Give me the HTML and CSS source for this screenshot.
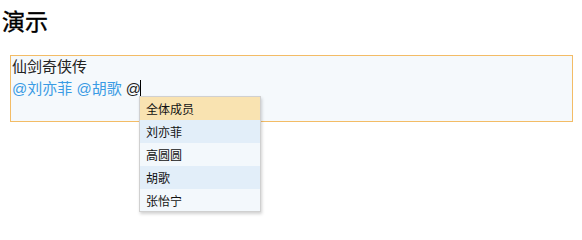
FILE: index.html
```html
<!DOCTYPE html>
<html lang="zh">
<head>
<meta charset="utf-8">
<title>演示</title>
<link rel="stylesheet" href="styles.css">
</head>
<body>
<h2 class="title">演示</h2>
<div class="editor">
  <div class="line">仙剑奇侠传</div>
  <div class="line"><span class="mention">@刘亦菲</span> <span class="mention">@胡歌</span> @<span class="caret"></span></div>
</div>
<ul class="menu">
  <li class="item active">全体成员</li>
  <li class="item odd">刘亦菲</li>
  <li class="item even">高圆圆</li>
  <li class="item odd">胡歌</li>
  <li class="item even">张怡宁</li>
</ul>
</body>
</html>
```
FILE: styles.css
```css
html, body {
  margin: 0;
  padding: 0;
  background: #fff;
}
body {
  position: relative;
  width: 582px;
  height: 240px;
  font-family: "Liberation Sans", "Noto Sans CJK SC", sans-serif;
  color: #222;
}
.title {
  margin: 4px 0 0 2px;
  font-family: "Noto Sans CJK SC", serif;
  font-size: 23px;
  line-height: 32px;
  font-weight: normal;
  color: #000;
  -webkit-text-stroke: 0.4px #000;
}
.editor {
  margin: 19px 0 0 10px;
  width: 560px;
  height: 65px;
  border: 1px solid #f3bc66;
  background: #f5f9fc;
  padding: 0 0 0 1px;
  box-sizing: content-box;
  font-size: 15px;
  line-height: 22px;
}
.line {
  height: 22px;
}
.mention {
  color: #3a9be4;
}
.caret {
  display: inline-block;
  width: 1px;
  height: 18px;
  margin-left: -1px;
  background: #000;
  vertical-align: -4px;
}
.menu {
  position: absolute;
  left: 139px;
  top: 96px;
  width: 120px;
  margin: 0;
  padding: 0;
  list-style: none;
  border: 1px solid #d0d0d0;
  background: #f4f8fb;
  box-shadow: 1px 2px 3px rgba(0,0,0,0.18);
  font-family: "Noto Sans CJK SC", sans-serif;
  font-size: 12px;
  color: #111;
}
.item {
  height: 23px;
  line-height: 24px;
  padding-left: 6px;
}
.item:last-child {
  height: 22px;
}
.active { background: #f9e3b1; }
.odd { background: #e2eef9; }
.even { background: #f3f8fc; }
```
